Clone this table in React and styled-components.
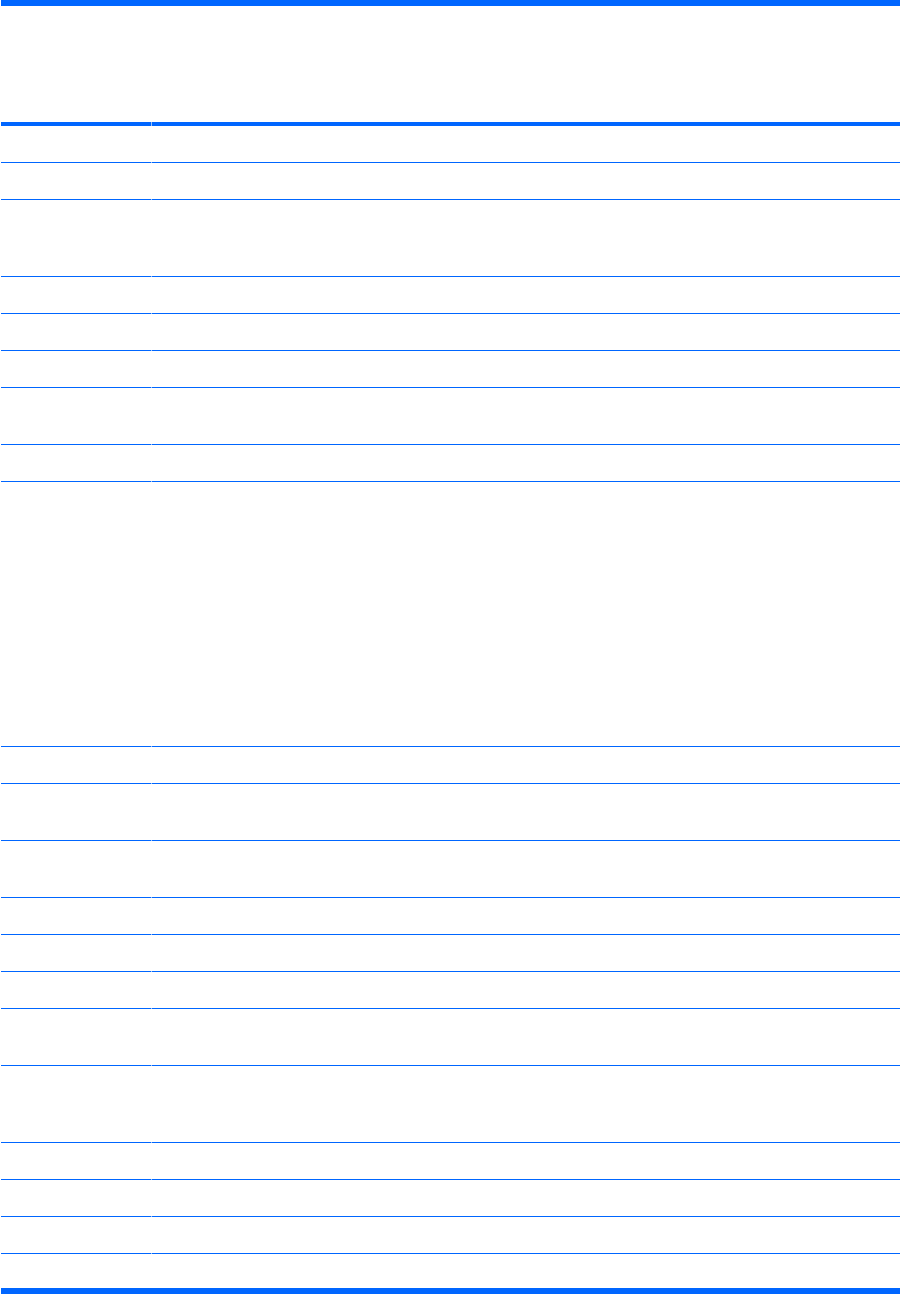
import React from "react";
import styled, { createGlobalStyle } from "styled-components";

const Global = createGlobalStyle`
  html, body { margin: 0; padding: 0; background: #ffffff; }
  body { font-family: "Liberation Sans", Arial, sans-serif; font-size: 13px; color: #000; }
`;

const BLUE = "#0066ff";
const GAP = "#9cc4f7";

const Table = styled.div`
  margin-left: 1px;
  width: 899px;
  display: flex;
  flex-direction: column;
  border-top: 6px solid ${BLUE};
  border-bottom: 6px solid ${BLUE};
`;

const Row = styled.div`
  display: grid;
  grid-template-columns: 150px 1px 1fr;
`;

const Cell = styled.div`
  height: ${(p) => p.$h}px;
  box-sizing: content-box;
  border-bottom: ${(p) => (p.$line ? `${p.$line}px solid ${p.$gap ? GAP : BLUE}` : "none")};
`;

const rows = [36, 36, 76, 36, 36, 36, 56, 36, 264, 36, 56, 56, 36, 36, 36, 56, 76, 36, 36, 36];

function TableRow({ h, line }) {
  return (
    <Row>
      <Cell $h={h} $line={line} />
      <Cell $h={h} $line={line} $gap />
      <Cell $h={h} $line={line} />
    </Row>
  );
}

export default function App() {
  return (
    <>
      <Global />
      <Table>
        <TableRow h={116} line={4} />
        {rows.map((h, i) => (
          <TableRow key={i} h={h} line={1} />
        ))}
        <TableRow h={34} line={0} />
      </Table>
    </>
  );
}
